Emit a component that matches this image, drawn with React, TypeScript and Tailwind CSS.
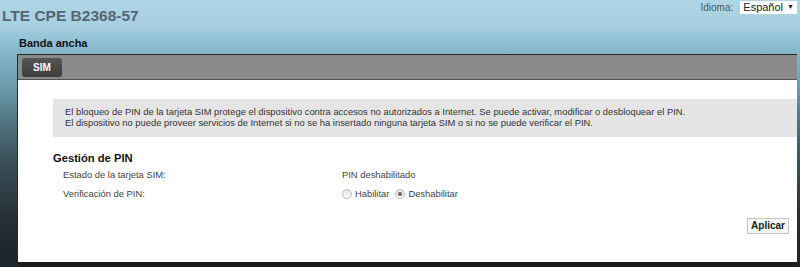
const font = { fontFamily: '"Liberation Sans", Arial, sans-serif' };

const Radio = ({ checked }: { checked?: boolean }) => (
  <span className="inline-flex h-[10px] w-[10px] items-center justify-center rounded-full border border-[#bdbdbd] bg-[linear-gradient(to_bottom,#e4e4e4,#fafafa)]">
    {checked && <span className="h-[4px] w-[4px] rounded-full bg-[#666]" />}
  </span>
);

export default function App() {
  return (
    <div
      className="flex h-[267px] w-[800px] flex-col overflow-hidden bg-[linear-gradient(to_bottom,#b0d6e6_0%,#a6cfe1_10%,#8fbfd3_16%,#7fb1c5_22%,#6d9cae_32%,#527684_45%,#384d56_62%,#252f35_82%,#1c2328_100%)] text-[#333]"
      style={font}
    >
      <header className="flex h-[37px] items-start justify-between">
        <h1 className="pl-[2px] pt-[4px] text-[15.5px] font-bold text-[#56666e]">
          LTE CPE B2368-57
        </h1>
        <div className="flex items-center gap-[7px] pr-[3px] text-[10px]">
          <span className="text-[#4d5a60]">Idioma:</span>
          <span className="flex h-[13px] items-center gap-[4px] bg-white px-[3px] text-[11px] text-[#222]">
            Español <span className="text-[7px]">▼</span>
          </span>
        </div>
      </header>

      <div className="pb-[4px] pl-[19px] text-[11px] font-bold leading-[13px] text-[#111]">
        Banda ancha
      </div>

      <section className="ml-[17px] mr-[3px] flex flex-1 flex-col border-l border-t border-[#2a2a2a]">
        <div className="flex h-[25px] items-center border-b border-[#555] bg-[#8b8b8b] px-[4px]">
          <span className="flex h-[19px] w-[40px] items-center justify-center rounded-[3px] bg-[linear-gradient(to_bottom,#555,#3d3d3d)] text-[10px] font-bold text-white">
            SIM
          </span>
        </div>

        <div className="flex flex-1 flex-col bg-white pl-[35px] pt-[19px] text-[9.4px]">
          <div className="bg-[#e5e5e5] px-[12px] pb-[9px] pt-[7px] leading-[11px] text-[#333]">
            <p>
              El bloqueo de PIN de la tarjeta SIM protege el dispositivo contra
              accesos no autorizados a Internet. Se puede activar, modificar o
              desbloquear el PIN.
            </p>
            <p>
              El dispositivo no puede proveer servicios de Internet si no se ha
              insertado ninguna tarjeta SIM o si no se puede verificar el PIN.
            </p>
          </div>

          <h2 className="mt-[15px] text-[11.2px] font-bold leading-[13px] text-[#111]">
            Gestión de PIN
          </h2>
          <div className="mt-[4px] grid grid-cols-[279px_1fr] gap-y-[7px] pl-[10px] leading-[12px] text-[#444]">
            <span>Estado de la tarjeta SIM:</span>
            <span>PIN deshabilitado</span>
            <span>Verificación de PIN:</span>
            <span className="flex items-center gap-[3px]">
              <Radio />
              <span className="mr-[3px]">Habilitar</span>
              <Radio checked />
              <span>Deshabilitar</span>
            </span>
          </div>

          <div className="mt-[18px] flex justify-end pr-[8px]">
            <button className="h-[16px] border border-[#c4c4c4] bg-[#f6f6f6] px-[3px] text-[10px] font-bold leading-[14px] text-[#222]">
              Aplicar
            </button>
          </div>
        </div>

        <div className="h-[5px] bg-[#1c1c1c]" />
      </section>
    </div>
  );
}
